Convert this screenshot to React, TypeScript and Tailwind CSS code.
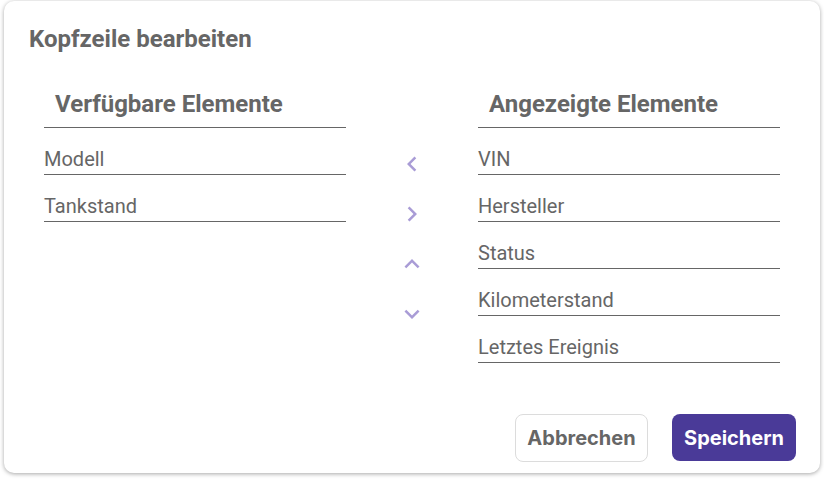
import { MdChevronLeft, MdChevronRight, MdKeyboardArrowUp, MdKeyboardArrowDown } from 'react-icons/md'

const available = ['Modell', 'Tankstand']
const shown = ['VIN', 'Hersteller', 'Status', 'Kilometerstand', 'Letztes Ereignis']

function ListColumn({ title, items }: { title: string; items: string[] }) {
  return (
    <div className="w-[302px] flex flex-col">
      <div className="pl-[11px] pt-[3px] pb-[9px] border-b border-[#666] text-[24px] leading-[28px] font-bold text-[#666]">
        {title}
      </div>
      {items.map(item => (
        <div
          key={item}
          className="pt-[19px] pb-[3px] border-b border-[#666] text-[20px] leading-[24px] text-[#666]"
        >
          {item}
        </div>
      ))}
    </div>
  )
}

export default function App() {
  return (
    <div className="bg-white w-[824px] h-[482px] pl-[4px] pt-[1px]" style={{ fontFamily: 'Roboto, sans-serif' }}>
      <div className="w-[816px] h-[472px] bg-white rounded-[10px] shadow-[0_1px_4px_rgba(0,0,0,0.35)] flex flex-col">
        <h1 className="pl-[25px] pt-[24px] text-[24px] leading-[28px] font-bold text-[#666]">Kopfzeile bearbeiten</h1>

        <div className="flex px-10 mt-[34px]">
          <ListColumn title="Verfügbare Elemente" items={available} />

          <div className="w-[132px] flex flex-col items-center pt-[52px] text-[#a99cd6]">
            <div className="h-[50px] flex items-center justify-center">
              <MdChevronLeft size={30} />
            </div>
            <div className="h-[50px] flex items-center justify-center">
              <MdChevronRight size={30} />
            </div>
            <div className="h-[50px] flex items-center justify-center">
              <MdKeyboardArrowUp size={30} />
            </div>
            <div className="h-[50px] flex items-center justify-center">
              <MdKeyboardArrowDown size={30} />
            </div>
          </div>

          <ListColumn title="Angezeigte Elemente" items={shown} />
        </div>

        <div className="mt-auto mb-[11px] flex justify-end gap-6 pr-6" style={{ fontFamily: 'Inter, sans-serif' }}>
          <button className="w-[133px] h-[48px] rounded-[8px] border border-[#dcdcdc] bg-white text-[20px] font-bold text-[#666]">
            Abbrechen
          </button>
          <button className="w-[124px] h-[47px] rounded-[8px] bg-[#4a3a98] text-[20px] font-bold text-white">
            Speichern
          </button>
        </div>
      </div>
    </div>
  )
}
